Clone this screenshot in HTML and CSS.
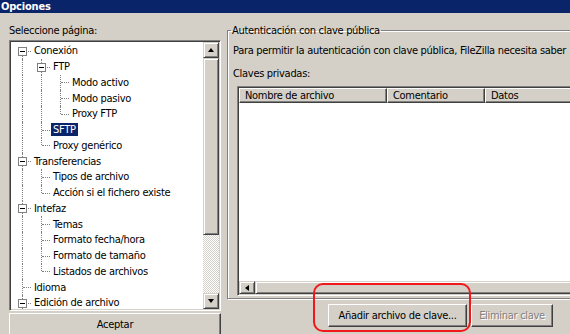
FILE: index.html
```html
<!DOCTYPE html>
<html lang="es">
<head>
<meta charset="utf-8">
<title>Opciones</title>
<link rel="stylesheet" href="styles.css">
</head>
<body>
<div class="win">
  <div class="title">Opciones</div>
  <div class="main">
    <div class="left">
      <div class="lab">Seleccione página:</div>
      <div class="tree">
        <div class="items">
          <div class="row"><span class="c f"><span class="exp"></span></span><span class="lbl">Conexión</span></div>
          <div class="row"><span class="c v"></span><span class="c t"><span class="exp"></span></span><span class="lbl">FTP</span></div>
          <div class="row"><span class="c v"></span><span class="c v"></span><span class="c t"></span><span class="lbl">Modo activo</span></div>
          <div class="row"><span class="c v"></span><span class="c v"></span><span class="c t"></span><span class="lbl">Modo pasivo</span></div>
          <div class="row"><span class="c v"></span><span class="c v"></span><span class="c l"></span><span class="lbl">Proxy FTP</span></div>
          <div class="row"><span class="c v"></span><span class="c t"></span><span class="lbl sel">SFTP</span></div>
          <div class="row"><span class="c v"></span><span class="c l"></span><span class="lbl">Proxy genérico</span></div>
          <div class="row"><span class="c t"><span class="exp"></span></span><span class="lbl">Transferencias</span></div>
          <div class="row"><span class="c v"></span><span class="c t"></span><span class="lbl">Tipos de archivo</span></div>
          <div class="row"><span class="c v"></span><span class="c l"></span><span class="lbl">Acción si el fichero existe</span></div>
          <div class="row"><span class="c t"><span class="exp"></span></span><span class="lbl">Intefaz</span></div>
          <div class="row"><span class="c v"></span><span class="c t"></span><span class="lbl">Temas</span></div>
          <div class="row"><span class="c v"></span><span class="c t"></span><span class="lbl">Formato fecha/hora</span></div>
          <div class="row"><span class="c v"></span><span class="c t"></span><span class="lbl">Formato de tamaño</span></div>
          <div class="row"><span class="c v"></span><span class="c l"></span><span class="lbl">Listados de archivos</span></div>
          <div class="row"><span class="c t"></span><span class="lbl">Idioma</span></div>
          <div class="row"><span class="c t"><span class="exp"></span></span><span class="lbl">Edición de archivo</span></div>
        </div>
        <div class="vscroll">
          <div class="sbtn"><span class="arr up"></span></div>
          <div class="thumb"></div>
          <div class="track"></div>
          <div class="sbtn"><span class="arr down"></span></div>
        </div>
      </div>
      <div class="btn wide">Aceptar</div>
    </div>
    <div class="right">
      <fieldset class="group">
        <legend>Autenticación con clave pública</legend>
        <div class="p1">Para permitir la autenticación con clave pública, FileZilla necesita saber</div>
        <div class="p2">Claves privadas:</div>
        <div class="list">
          <div class="hdr">
            <div class="hc c1">Nombre de archivo</div>
            <div class="hc c2">Comentario</div>
            <div class="hc c3">Datos</div>
          </div>
          <div class="lbody"></div>
          <div class="hscroll">
            <div class="sbtn h"><span class="arr left"></span></div>
            <div class="hthumb"></div>
          </div>
        </div>
      </fieldset>
      <div class="btnrow">
        <div class="btn add">Añadir archivo de clave...</div>
        <div class="btn del">Eliminar clave</div>
      </div>
    </div>
  </div>
  <div class="mark"></div>
</div>
</body>
</html>
```
FILE: styles.css
```css
html, body { margin: 0; padding: 0; }
body { background: #d4d0c8; }
.win {
  position: relative;
  width: 570px;
  height: 334px;
  overflow: hidden;
  background: #d4d0c8;
  font-family: "DejaVu Sans Condensed", "DejaVu Sans", sans-serif;
  font-size: 11px;
  letter-spacing: -0.3px;
  color: #000;
}
.title {
  height: 13px;
  line-height: 13px;
  background: #0a246a;
  color: #fff;
  font-weight: bold;
  padding-left: 1px;
  letter-spacing: -0.2px;
}
.main { display: flex; padding-left: 9px; }
.left { width: 212px; flex: none; display: flex; flex-direction: column; }
.lab { margin-top: 11px; line-height: 13px; height: 13px; }
.tree {
  margin-top: 3px;
  height: 267px;
  display: flex;
  border: 1px solid;
  border-color: #808080 #fff #fff #808080;
  box-shadow: inset 1px 1px #404040, inset -1px -1px #d4d0c8;
  padding: 1px;
  background: #fff;
}
.items { flex: 1; padding: 1px 0 0 2px; overflow: hidden; }
.row { display: flex; height: 15.75px; align-items: center; }
.c { position: relative; width: 19px; flex: none; align-self: stretch; }
.c::before, .c::after { content: ""; position: absolute; }
.c.v::before, .c.t::before { left: 9px; top: 0; bottom: 0; border-left: 1px dotted #808080; }
.c.l::before { left: 9px; top: 0; height: 50%; border-left: 1px dotted #808080; }
.c.f::before { left: 9px; top: 50%; bottom: 0; border-left: 1px dotted #808080; }
.c.t::after, .c.l::after, .c.f::after { left: 10px; top: 50%; width: 8px; border-top: 1px dotted #808080; }
.exp {
  position: absolute;
  left: 5px;
  top: calc(50% - 4px);
  width: 7px;
  height: 7px;
  border: 1px solid #808080;
  background: #fff;
  z-index: 1;
}
.exp::after {
  content: "";
  position: absolute;
  left: 1px;
  top: 3px;
  width: 5px;
  height: 1px;
  background: #000;
}
.lbl { padding: 0 2px; line-height: 13px; white-space: nowrap; }
.lbl.sel { background: #0a246a; color: #fff; }
.vscroll { width: 16px; flex: none; display: flex; flex-direction: column; }
.sbtn {
  width: 14px;
  height: 14px;
  flex: none;
  background: #d4d0c8;
  border: 1px solid;
  border-color: #d4d0c8 #404040 #404040 #d4d0c8;
  box-shadow: inset 1px 1px #fff, inset -1px -1px #808080;
  display: flex;
  align-items: center;
  justify-content: center;
}
.thumb {
  height: 175px;
  flex: none;
  background: #d4d0c8;
  border: 1px solid;
  border-color: #d4d0c8 #404040 #404040 #d4d0c8;
  box-shadow: inset 1px 1px #fff, inset -1px -1px #808080;
}
.track {
  flex: 1;
  background-color: #d4d0c8;
  background-image: conic-gradient(#fff 25%, #d4d0c8 0 50%, #fff 0 75%, #d4d0c8 0);
  background-size: 2px 2px;
}
.arr { width: 0; height: 0; border-style: solid; border-color: transparent; }
.arr.up { border-width: 0 3.5px 4px 3.5px; border-bottom-color: #000; }
.arr.down { border-width: 4px 3.5px 0 3.5px; border-top-color: #000; }
.arr.left { border-width: 3.5px 4px 3.5px 0; border-right-color: #000; }
.btn {
  box-sizing: border-box;
  height: 23px;
  line-height: 21px;
  text-align: center;
  background: #d4d0c8;
  border: 1px solid;
  border-color: #fff #404040 #404040 #fff;
  box-shadow: inset -1px -1px #808080;
  white-space: nowrap;
}
.btn.wide { margin-top: 2px; width: 212px; }
.right { width: 380px; flex: none; margin-left: 6px; display: flex; flex-direction: column; }
.group {
  margin: 11px 0 0 0;
  padding: 0 0 2px 5px;
  border: 1px solid #808080;
  box-shadow: inset 1px 1px #fff, 1px 1px #fff;
  min-width: 0;
}
.group legend { padding: 0 1px; margin-left: -2px; line-height: 13px; }
.p1 { margin-top: 7px; line-height: 13px; white-space: nowrap; }
.p2 { margin-top: 10px; line-height: 13px; }
.list {
  margin: 6px 0 0 4px;
  height: 206px;
  display: flex;
  flex-direction: column;
  border: 1px solid;
  border-color: #808080 #fff #fff #808080;
  box-shadow: inset 1px 1px #404040, inset -1px -1px #d4d0c8;
  padding: 1px;
  background: #fff;
}
.hdr { display: flex; height: 15px; flex: none; }
.hc {
  box-sizing: border-box;
  height: 15px;
  line-height: 13px;
  padding-left: 5px;
  background: #d4d0c8;
  border: 1px solid;
  border-color: #fff #404040 #404040 #fff;
  box-shadow: inset -1px -1px #808080;
  white-space: nowrap;
  flex: none;
}
.hc.c1 { width: 148px; }
.hc.c2 { width: 98px; }
.hc.c3 { width: 140px; }
.lbody { flex: 1; }
.hscroll { display: flex; height: 13px; flex: none; }
.sbtn.h { width: 14px; height: 11px; }
.hthumb {
  flex: 1;
  background: #d4d0c8;
  border: 1px solid;
  border-color: #d4d0c8 #404040 #404040 #d4d0c8;
  box-shadow: inset 1px 1px #fff, inset -1px -1px #808080;
}
.btnrow { display: flex; gap: 4px; margin-top: 5px; padding-left: 101px; }
.btn.add { width: 139px; }
.btn.del { width: 82px; color: #808080; text-shadow: 1px 1px #fff; }
.mark {
  position: absolute;
  left: 313px;
  top: 283px;
  width: 154px;
  height: 45px;
  border: 2px solid #f01818;
  border-radius: 10px;
}
```
